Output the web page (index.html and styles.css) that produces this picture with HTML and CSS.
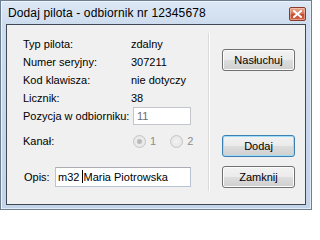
FILE: index.html
```html
<!DOCTYPE html>
<html>
<head>
<meta charset="utf-8">
<link rel="stylesheet" href="styles.css">
</head>
<body>
<div class="window">
  <div class="titlebar">
    <span class="title">Dodaj pilota - odbiornik nr 12345678</span>
    <span class="close"><svg width="9" height="8" viewBox="0 0 9 8"><path d="M1 1 L8 7 M8 1 L1 7" stroke="#fff" stroke-width="2" stroke-linecap="square"/></svg></span>
  </div>
  <div class="client">
    <div class="left">
      <div class="row r1"><span class="lbl">Typ pilota:</span><span class="val">zdalny</span></div>
      <div class="row"><span class="lbl">Numer seryjny:</span><span class="val">307211</span></div>
      <div class="row"><span class="lbl">Kod klawisza:</span><span class="val">nie dotyczy</span></div>
      <div class="row"><span class="lbl">Licznik:</span><span class="val">38</span></div>
      <div class="row"><span class="lbl">Pozycja w odbiorniku:</span><span class="input disabled">11</span></div>
      <div class="row radios"><span class="lbl">Kanał:</span>
        <span class="radio checked"></span><span class="rtext">1</span>
        <span class="radio"></span><span class="rtext">2</span>
      </div>
      <div class="row opis"><span class="lbl2">Opis:</span><span class="input wide">m32 <span class="caret"></span>Maria Piotrowska</span></div>
    </div>
    <div class="sep"></div>
    <div class="right">
      <div class="btn b1">Nasłuchuj</div>
      <div class="btn def">Dodaj</div>
      <div class="btn b3">Zamknij</div>
    </div>
  </div>
</div>
</body>
</html>
```
FILE: styles.css
```css
html, body { margin: 0; padding: 0; }
body { width: 312px; height: 210px; overflow: hidden; font-family: "Liberation Sans", Arial, sans-serif; font-size: 11px; color: #000; }
.window {
  box-sizing: border-box; width: 312px; height: 210px;
  border: 1px solid #6f7f92;
  background: linear-gradient(#dde8f5 0px, #cddcee 24px, #c3d4e9 100%);
  padding: 0 5px 4px 5px;
  display: flex; flex-direction: column;
  box-shadow: inset 1px 1px 0 #eef4fb, inset -1px -1px 0 #e3ecf6;
}
.titlebar { height: 23px; display: flex; align-items: center; justify-content: space-between; }
.title { font-size: 12px; padding-left: 2px; padding-top: 1px; color: #000; letter-spacing: 0.12px; }
.close {
  width: 15px; height: 12px; margin-top: 2px;
  border: 1px solid #8a3a2c; border-radius: 2px;
  background: linear-gradient(#eaa892 0%, #d97459 45%, #c64a2f 55%, #d0664a 100%);
  display: flex; align-items: center; justify-content: center;
  box-shadow: inset 0 0 0 1px rgba(255,225,210,0.45);
}
.client {
  flex: 1; border: 1px solid #3e4955; background: #f0f0f0;
  display: flex;
}
.left { width: 201px; padding-top: 9px; display: flex; flex-direction: column; }
.row { display: flex; align-items: center; height: 18px; line-height: 18px; }
.r1 { height: 19px; }
.lbl { width: 108px; padding-left: 16px; flex: none; }
.input {
  box-sizing: border-box; height: 18px; width: 58px; margin-left: 2px;
  border: 1px solid #abadb3; border-top-color: #9aa0a8; background: #fff;
  padding-left: 3px; line-height: 16px;
}
.disabled { color: #6d6d6d; border-color: #c2c6cc; }
.radios { margin-top: 7px; }
.radio {
  box-sizing: border-box; width: 13px; height: 13px; border-radius: 50%;
  border: 1px solid #c5c5c5; background: radial-gradient(circle, #f2f2f2 0, #e2e2e2 100%);
  margin-left: 2px; flex: none; position: relative;
}
.radio.checked::after {
  content: ""; position: absolute; left: 3px; top: 3px; width: 5px; height: 5px; border-radius: 50%;
  background: #b9b9b9;
}
.rtext { color: #8d8d8d; margin-left: 4px; margin-right: 12px; }
.opis { margin-top: 17px; height: 20px; }
.lbl2 { width: 31px; padding-left: 17px; flex: none; }
.wide { width: 136px; height: 20px; margin-left: 0; padding-left: 2px; line-height: 18px; border-color: #b8c4d4; border-top-color: #abadb3; }
.caret { display: inline-block; width: 1px; height: 13px; background: #000; vertical-align: -2px; }
.sep { width: 1px; border-right: 1px solid #fff; background: #dadada; margin-top: 8px; margin-bottom: 13px; }
.right { padding-left: 12px; padding-top: 24px; display: flex; flex-direction: column; }
.btn {
  box-sizing: border-box; width: 73px; height: 22px; border: 1px solid #707070; border-radius: 3px;
  background: linear-gradient(#f2f2f2 0%, #ebebeb 48%, #dddddd 52%, #cfcfcf 100%);
  box-shadow: inset 0 0 0 1px #fcfcfc;
  display: flex; align-items: center; justify-content: center;
}
.def {
  margin-top: 64px; border-color: #3c7fb1;
  box-shadow: inset 0 0 0 1px #9fdcf7;
}
.b3 { margin-top: 9px; }
```
